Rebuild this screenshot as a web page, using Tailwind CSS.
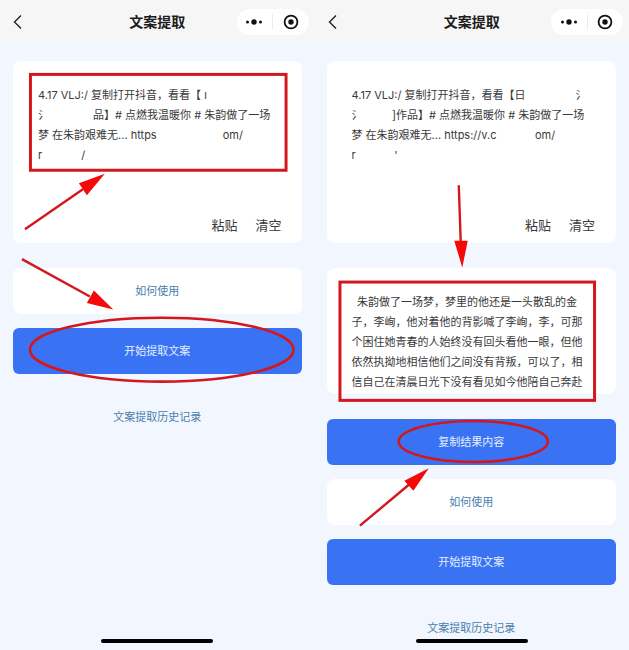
<!DOCTYPE html>
<html lang="zh-CN">

<head>
    <meta charset="UTF-8">
    <meta name="viewport" content="width=device-width, initial-scale=1.0">
    <title>文案提取</title>
    <script src="https://cdn.jsdelivr.net/npm/@tailwindcss/browser@4"></script>
</head>

<body class="bg-[#f2f6fe] font-['Inter','Noto_Sans_CJK_SC',sans-serif] text-[11px] leading-[20px] text-[#3a3a3a]">
    <main class="grid grid-cols-2 min-h-screen">

        <!-- Step 1: paste the link and start -->
        <section class="relative flex flex-col min-h-screen">
            <header class="grid grid-cols-[72px_1fr_72px] items-center h-[41px] pt-[3px] px-[6px] bg-[#f6f6f6]">
                <button type="button" aria-label="返回" class="pl-[7px]">
                    <svg class="w-[9px] h-[16px]" viewBox="0 0 9 16" fill="none" stroke="#222" stroke-width="1.4"><path d="M8 1.5 1.5 8 8 14.5" /></svg>
                </button>
                <h1 class="text-center text-[14px] font-bold text-[#1c1c1c]">文案提取</h1>
                <div class="flex items-center h-[26px] rounded-full bg-white">
                    <button type="button" aria-label="更多" class="flex-1 flex justify-center">
                        <svg class="w-[18px] h-[8px]" viewBox="0 0 18 8" fill="#111"><circle cx="2.5" cy="4" r="1.5" /><circle cx="9" cy="4" r="2.7" /><circle cx="15.5" cy="4" r="1.5" /></svg>
                    </button>
                    <span class="w-px h-[16px] bg-[#ececec]"></span>
                    <button type="button" aria-label="关闭" class="flex-1 flex justify-center">
                        <svg class="w-[16px] h-[16px]" viewBox="0 0 16 16"><circle cx="8" cy="8" r="6.4" fill="none" stroke="#111" stroke-width="1.8" /><circle cx="8" cy="8" r="2.7" fill="#111" /></svg>
                    </button>
                </div>
            </header>

            <div class="flex flex-col px-[13px] pt-[20px]">
                <div class="flex flex-col h-[182px] px-[25px] pt-[20px] pb-[8px] rounded-[8px] bg-white">
                    <textarea aria-label="链接" rows="4" spellcheck="false" class="block -mr-5 h-[96px] py-[4px] resize-none overflow-hidden whitespace-pre outline-none">4.17 VLJ:/ 复制打开抖音，看看【 ı
氵&emsp;&emsp;&emsp;&emsp;品】# 点燃我温暖你 # 朱韵做了一场
梦 在朱韵艰难无... https&emsp;&emsp;&emsp;&emsp;&emsp;&emsp;om/
r&emsp;&emsp;&emsp;&thinsp;&thinsp;&thinsp;/</textarea>
                    <div class="flex justify-end gap-[18px] mt-auto -mr-[5px] text-[13px] leading-[20px]">
                        <button type="button">粘贴</button>
                        <button type="button">清空</button>
                    </div>
                </div>
                <button type="button" class="h-[46px] mt-[25px] rounded-[8px] bg-white text-[#4a7eac]">如何使用</button>
                <button type="button" class="h-[46px] mt-[14px] rounded-[6px] bg-[#3973f4] text-[#e6efff]">开始提取文案</button>
                <a href="#" class="mt-[33px] text-center text-[#4a7eac]">文案提取历史记录</a>
            </div>
            <div class="w-[112px] h-[4px] mt-auto mx-auto mb-[7px] rounded-full bg-black"></div>

            <svg class="absolute top-0 left-0 w-full h-[650px] pointer-events-none" viewBox="0 0 315 650" fill="none" stroke="#d3181d">
                <rect x="30.5" y="74" width="256" height="96" stroke-width="3" />
                <ellipse cx="162" cy="349.7" rx="132" ry="32" stroke-width="2.6" />
                <path d="M25 229 83 189M22 259l68 37.5" stroke-width="2.4" />
                <path d="M105 173.5 79 183l8 12zM113.5 309.5 94 290.5 87 303z" fill="#f50808" stroke="none" />
            </svg>
        </section>

        <!-- Step 2: copy the result -->
        <section class="relative flex flex-col min-h-screen">
            <header class="grid grid-cols-[72px_1fr_72px] items-center h-[41px] pt-[3px] px-[6px] bg-[#f6f6f6]">
                <button type="button" aria-label="返回" class="pl-[7px]">
                    <svg class="w-[9px] h-[16px]" viewBox="0 0 9 16" fill="none" stroke="#222" stroke-width="1.4"><path d="M8 1.5 1.5 8 8 14.5" /></svg>
                </button>
                <h1 class="text-center text-[14px] font-bold text-[#1c1c1c]">文案提取</h1>
                <div class="flex items-center h-[26px] rounded-full bg-white">
                    <button type="button" aria-label="更多" class="flex-1 flex justify-center">
                        <svg class="w-[18px] h-[8px]" viewBox="0 0 18 8" fill="#111"><circle cx="2.5" cy="4" r="1.5" /><circle cx="9" cy="4" r="2.7" /><circle cx="15.5" cy="4" r="1.5" /></svg>
                    </button>
                    <span class="w-px h-[16px] bg-[#ececec]"></span>
                    <button type="button" aria-label="关闭" class="flex-1 flex justify-center">
                        <svg class="w-[16px] h-[16px]" viewBox="0 0 16 16"><circle cx="8" cy="8" r="6.4" fill="none" stroke="#111" stroke-width="1.8" /><circle cx="8" cy="8" r="2.7" fill="#111" /></svg>
                    </button>
                </div>
            </header>

            <div class="flex flex-col pl-[12px] pr-[13px] pt-[20px]">
                <div class="flex flex-col h-[182px] px-[25px] pt-[20px] pb-[8px] rounded-[8px] bg-white">
                    <textarea aria-label="链接" rows="4" spellcheck="false" class="block -mr-5 h-[96px] py-[4px] resize-none overflow-hidden whitespace-pre outline-none">4.17 VLJ:/ 复制打开抖音，看看【日&emsp;&emsp;&emsp;&emsp;&thinsp;&thinsp;&thinsp;氵
氵&emsp;&emsp;&ensp;&thinsp;]作品】# 点燃我温暖你 # 朱韵做了一场
梦 在朱韵艰难无... https://v.c&emsp;&emsp;&emsp;&ensp;om/
r&emsp;&emsp;&emsp;&ensp;'</textarea>
                    <div class="flex justify-end gap-[18px] mt-auto -mr-[4px] text-[13px] leading-[20px]">
                        <button type="button">粘贴</button>
                        <button type="button">清空</button>
                    </div>
                </div>
                <div class="mt-[25px] px-[25px] pt-[24px] pb-[2px] rounded-[8px] bg-white whitespace-nowrap">
                    <p>&ensp;朱韵做了一场梦，梦里的他还是一头散乱的金<br>子，李峋，他对着他的背影喊了李峋，李，可那<br>个困住她青春的人始终没有回头看他一眼，但他<br>依然执拗地相信他们之间没有背叛，可以了，相<br>信自己在清晨日光下没有看见如今他陪自己奔赴</p>
                </div>
                <button type="button" class="h-[46px] mt-[25px] rounded-[6px] bg-[#3973f4] text-[#e6efff]">复制结果内容</button>
                <button type="button" class="h-[46px] mt-[14px] rounded-[8px] bg-white text-[#4a7eac]">如何使用</button>
                <button type="button" class="h-[46px] mt-[14px] rounded-[6px] bg-[#3973f4] text-[#e6efff]">开始提取文案</button>
                <a href="#" class="mt-[33px] text-center text-[#4a7eac]">文案提取历史记录</a>
            </div>
            <div class="w-[112px] h-[4px] mt-auto mx-auto mb-[7px] rounded-full bg-black"></div>

            <svg class="absolute top-0 left-0 w-full h-[650px] pointer-events-none" viewBox="0 0 315 650" fill="none" stroke="#d3181d">
                <rect x="25" y="282" width="255" height="118.5" stroke-width="3" />
                <ellipse cx="158.5" cy="441.7" rx="74.7" ry="20.5" stroke-width="2.6" />
                <path d="M144 185l2 58M45 526l49-41" stroke-width="2.4" />
                <path d="M147.5 267.5 139.5 240.5h13.5zM114 468.5 89.5 481l9 10z" fill="#f50808" stroke="none" />
            </svg>
        </section>

    </main>
</body>

</html>
